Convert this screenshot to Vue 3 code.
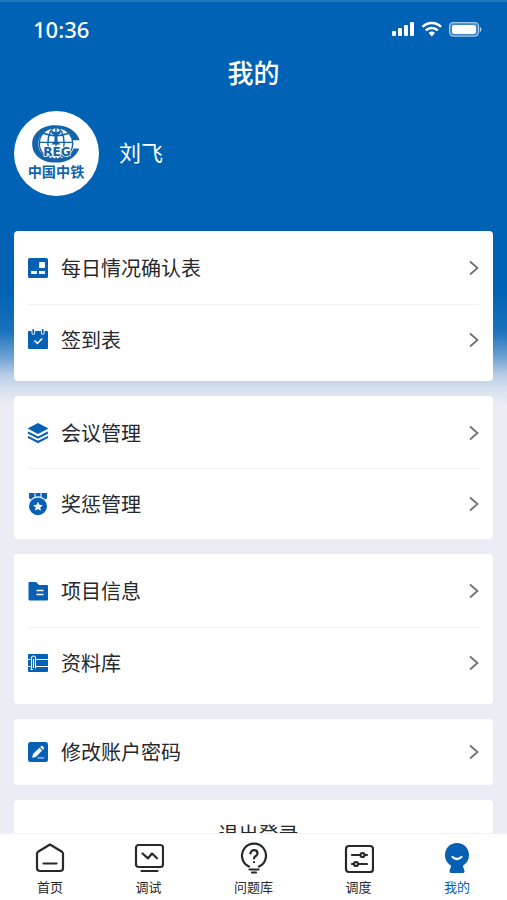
<template>
  <div class="page">
    <main class="content">
      <div class="status-bar">
        <span class="time">10:36</span>
        <svg class="status-icons" width="92" height="18" viewBox="0 0 92 18" fill="#fff" aria-hidden="true">
          <rect x="1" y="11" width="4" height="5" rx="1" />
          <rect x="7" y="8" width="4" height="8" rx="1" />
          <rect x="13" y="5" width="4" height="11" rx="1" />
          <rect x="19" y="2" width="4" height="14" rx="1" />
          <g fill="none" stroke="#fff" stroke-width="2.5">
            <path d="M31.5 6.8a13 13 0 0 1 18.6 0" />
            <path d="M34.8 10.4a8.5 8.5 0 0 1 12 0" />
          </g>
          <path d="M37.6 13a4.8 4.8 0 0 1 6.4 0l-3.2 3.4z" />
          <rect x="58.6" y="2.6" width="29" height="13.5" rx="4" fill="#3b86c9" stroke="#a5c9e9" stroke-width="1.3" />
          <rect x="61" y="5" width="24" height="9" rx="2" />
          <path d="M89 7c2 .6 2 4.400 0 5z" fill="#a5c9e9" />
        </svg>
      </div>

      <h1 class="title">我的</h1>

      <section class="profile">
        <svg class="avatar" viewBox="0 0 84 84" role="img" aria-label="中国中铁">
          <circle cx="42" cy="42" r="42" fill="#fff" />
          <g fill="none" stroke="#1463ad" stroke-width="1.4">
            <ellipse cx="41.500" cy="32" rx="16.500" ry="16" />
            <ellipse cx="41.500" cy="32" rx="8" ry="16" />
            <path d="M41.500 16v32M25 31h33M29 22q12.500 5 25 0M29 46q12.500-4 25 0" />
          </g>
          <path
            d="M65 29C62 19.500 53 14 41 14 27 14 18 22 18 32.500S27 51 41 51c12 0 20-5 23.500-14H59c-3 7-9.500 10.500-17.500 10.500C31 47.500 24 41 24 32.500S31 17 41.500 17C50 17 55.500 21.500 58 29z"
            fill="#1463ad"
          />
          <path d="M37 19l2.500 1.500h4L46 19v3l-3 2v6l3 3h-9l3-3v-6l-3-2z" fill="#1463ad" />
          <text x="42.500" y="44" class="logo-letters">REG</text>
          <text x="41.500" y="65" class="logo-name">中国中铁</text>
        </svg>
        <span class="user-name">刘飞</span>
      </section>

      <nav class="cards" aria-label="功能菜单">
        <div v-for="(group, i) in menuGroups" :key="i" class="card" :class="group.size">
          <a v-for="item in group.items" :key="item.icon" href="#" class="row">
            <svg class="row-icon" viewBox="0 0 20 20" aria-hidden="true">
              <g v-if="item.icon === 'form'">
                <rect width="20" height="20" rx="1.500" fill="#0860b4" />
                <rect x="11" y="4" width="6" height="6" rx="1" fill="#fff" />
                <rect x="3" y="13" width="6" height="3" fill="#fff" />
                <rect x="11" y="13" width="6" height="3" fill="#fff" />
              </g>
              <g v-else-if="item.icon === 'calendar'">
                <path d="M1 1h18q1 0 1 1v16q0 1-1 1H1q-1 0-1-1V2q0-1 1-1z" fill="#0860b4" />
                <path d="M3.500-1v4q0 1.800 1.800 1.800T7.100 3V-1zM12.900-1v4q0 1.800 1.800 1.800T16.500 3V-1z" fill="#fff" />
                <path d="M5.300 0v3M14.700 0v3" stroke="#0860b4" stroke-width="1.800" stroke-linecap="round" />
                <path d="M6.500 10.500l2.900 2.900 4.800-4.900" fill="none" stroke="#fff" stroke-width="1.500" />
              </g>
              <g v-else-if="item.icon === 'layers'">
                <path d="M10 0l10.500 5.500L10 11-.5 5.500z" fill="#0860b4" />
                <path d="M0 9.500l10 5.200 10-5.200M0 13.800L10 19l10-5.200" fill="none" stroke="#0860b4" stroke-width="2" />
              </g>
              <g v-else-if="item.icon === 'medal'">
                <path d="M1-1h5.500v6l-3 1.500L1 4zM13.500-1H19v5l-2.500 2.500-3-1.500zM7.500-1h5v4h-5z" fill="#0860b4" />
                <circle cx="10" cy="12.300" r="10" fill="#fff" />
                <circle cx="10" cy="12.300" r="8.900" fill="#0860b4" />
                <path
                  d="M10 7.800l1.400 3 3.300.4-2.400 2.300.6 3.200-2.900-1.600-2.900 1.600.6-3.200-2.400-2.300 3.300-.4z"
                  fill="#fff"
                />
              </g>
              <g v-else-if="item.icon === 'folder'">
                <path d="M1 1h7l3 3h8q1 0 1 1v13.500q0 1-1 1H1.500q-1 0-1-1v-16.500q0-1 .5-1z" fill="#0860b4" />
                <path d="M8.500 9.500h7M8.500 13.500h7" stroke="#fff" stroke-width="1.600" />
              </g>
              <g v-else-if="item.icon === 'library'">
                <rect y="1" width="20" height="18" rx="1" fill="#0860b4" />
                <path d="M8 6.500h12M8 13.500h12M0 6.500h2.500M0 13.500h2.500" stroke="#fff" stroke-width="1.200" />
                <path
                  d="M3.500 16.500V5a2 2 0 0 1 4 0v10.500M5.500 6v9M2.500 16.500h2.500"
                  fill="none"
                  stroke="#fff"
                  stroke-width="1.100"
                />
              </g>
              <g v-else>
                <rect width="20" height="20" rx="2.500" fill="#0860b4" />
                <path
                  d="M4.200 15.700l.8-3.600 6.400-6.400 2.800 2.800-6.400 6.400zM12.200 4.900l.8-.8q.8-.6 1.500 0l1.300 1.300q.6.700 0 1.500l-.8.800z"
                  fill="#fff"
                />
                <path d="M9.500 15.900H16" stroke="#a9caea" stroke-width="1.300" />
              </g>
            </svg>
            <span class="row-label">{{ item.label }}</span>
            <svg class="chevron" viewBox="0 0 10 16" aria-hidden="true">
              <path d="M1 1.500L8.500 8 1 14.500" fill="none" stroke="#6c6f73" stroke-width="1.700" />
            </svg>
          </a>
        </div>
        <button type="button" class="card logout">退出登录</button>
      </nav>
    </main>

    <nav class="tab-bar" aria-label="底部导航">
      <a
        v-for="tab in tabs"
        :key="tab.key"
        href="#"
        class="tab"
        :class="{ active: activeTab === tab.key }"
        @click.prevent="activeTab = tab.key"
      >
        <svg
          class="tab-icon"
          viewBox="0 0 32 32"
          fill="none"
          stroke="currentColor"
          stroke-width="2.200"
          stroke-linecap="round"
          stroke-linejoin="round"
          aria-hidden="true"
        >
          <g v-if="tab.key === 'home'">
            <path d="M16 2.500l12 7.300q1 .7 1 2V26q0 3-3 3H6q-3 0-3-3V11.800q0-1.300 1-2z" />
            <path d="M9.500 21.500h13" />
          </g>
          <g v-else-if="tab.key === 'debug'">
            <rect x="4" y="3" width="27" height="22" rx="2.500" />
            <path d="M10.500 11.500l5.500 4.800 4-4.800 5 4.800M9.500 29h16" />
          </g>
          <g v-else-if="tab.key === 'issues'">
            <path d="M12 24.500a12 12 0 1 1 10 0M12.500 27.500h9M15 30.500h4" />
            <path d="M13.500 11.500c0-4.500 7-4.500 7 0 0 2.500-3.500 2.500-3.500 5" />
            <path d="M17 20v.2" />
          </g>
          <g v-else-if="tab.key === 'dispatch'">
            <rect x="4" y="4" width="27" height="26" rx="3" />
            <path d="M10 13h8M23 13h2M10 22h1M16 22h9" />
            <circle cx="20.500" cy="13" r="2" />
            <circle cx="14" cy="22" r="2" />
          </g>
          <g v-else stroke="none">
            <path
              d="M16 1C9 1 4 6.500 4 13c0 5 2.500 8.500 6 10.500-.3 3-1.500 4.500-1.500 5.500 0 1.300.5 2 1.500 2h12c1 0 1.500-.7 1.500-2 0-1-1.200-2.500-1.500-5.500 3.500-2 6-5.500 6-10.500C28 6.500 23 1 16 1z"
              fill="currentColor"
            />
            <path d="M11.500 15q4.500 4 9 0" stroke="#fff" stroke-width="2.200" />
          </g>
        </svg>
        <span>{{ tab.label }}</span>
      </a>
    </nav>
  </div>
</template>

<script setup>
import { ref } from 'vue';

const menuGroups = [
  {
    size: 'tall',
    items: [
      { icon: 'form', label: '每日情况确认表' },
      { icon: 'calendar', label: '签到表' }
    ]
  },
  {
    size: 'compact',
    items: [
      { icon: 'layers', label: '会议管理' },
      { icon: 'medal', label: '奖惩管理' }
    ]
  },
  {
    size: 'tall',
    items: [
      { icon: 'folder', label: '项目信息' },
      { icon: 'library', label: '资料库' }
    ]
  },
  {
    size: 'single',
    items: [{ icon: 'edit', label: '修改账户密码' }]
  }
];

const tabs = [
  { key: 'home', label: '首页' },
  { key: 'debug', label: '调试' },
  { key: 'issues', label: '问题库' },
  { key: 'dispatch', label: '调度' },
  { key: 'mine', label: '我的' }
];

const activeTab = ref('mine');
</script>

<style>
body {
  margin: 0;
  background: #ebecf4;
}
</style>

<style scoped>
.page {
  display: flex;
  flex-direction: column;
  height: 100vh;
  box-sizing: border-box;
  font-family: "Noto Sans CJK SC", sans-serif;
  color: #26282c;
  border-top: 2px solid #2577be;
  background: linear-gradient(
    #0062b4 0,
    #0062b4 290px,
    #1c72bc 330px,
    #6fa3d3 356px,
    #b5cbe4 372px,
    #d5e0ed 386px,
    #ebecf4 404px
  );
}

.content {
  flex: 1;
  min-height: 0;
  overflow-y: auto;
  scrollbar-width: none;
}

.status-bar {
  display: flex;
  justify-content: space-between;
  align-items: center;
  height: 54px;
  padding: 0 24px 0 33px;
  color: #fff;
}
.time {
  font-family: "Noto Sans", sans-serif;
  font-size: 22px;
  font-weight: 500;
}

.title {
  margin: 0;
  color: #fff;
  font-size: 26px;
  font-weight: 500;
  line-height: 32px;
  text-align: center;
}

.profile {
  display: flex;
  align-items: center;
  gap: 20px;
  padding: 23px 14px 35px;
}
.avatar {
  width: 85px;
  height: 85px;
}
.logo-letters {
  font: bold 12px "DejaVu Sans", sans-serif;
  fill: #1463ad;
  stroke: #fff;
  stroke-width: 1.5;
  paint-order: stroke;
  text-anchor: middle;
}
.logo-name {
  font-size: 14px;
  font-weight: 700;
  fill: #1463ad;
  text-anchor: middle;
}
.user-name {
  padding-bottom: 6px;
  color: #fff;
  font-size: 22px;
  line-height: 30px;
}

.cards {
  display: flex;
  flex-direction: column;
  gap: 15px;
  padding: 0 14px 15px;
}
.card {
  padding: 0 14px;
  border-radius: 4px;
  background: #fff;
}
.card.tall {
  padding-top: 1px;
  padding-bottom: 6px;
}
.card.compact {
  padding-top: 1px;
}

.row {
  display: flex;
  align-items: center;
  gap: 13px;
  height: 72px;
  box-sizing: border-box;
  color: inherit;
  text-decoration: none;
}
.row + .row {
  height: 71px;
  border-top: 1px solid #f1f1f3;
}
.compact .row {
  height: 71px;
}
.single .row {
  height: 66px;
}
.row-icon {
  width: 20px;
  height: 20px;
  overflow: visible;
}
.row-label {
  flex: 1;
  font-size: 20px;
  line-height: 28px;
}
.chevron {
  width: 10px;
  height: 16px;
}

.logout {
  height: 66px;
  padding-left: 24px;
  border: none;
  color: inherit;
  font-family: inherit;
  font-size: 20px;
  cursor: pointer;
}

.tab-bar {
  display: flex;
  justify-content: space-between;
  height: 67px;
  padding: 8px 37px 0;
  box-sizing: border-box;
  border-top: 1px solid #f0f0f3;
  background: #fff;
}
.tab {
  display: flex;
  flex-direction: column;
  align-items: center;
  gap: 4px;
  color: #26282c;
  font-size: 13px;
  line-height: 18px;
  text-decoration: none;
}
.tab-icon {
  width: 32px;
  height: 32px;
  margin: 0 -3px;
}
.tab.active {
  color: #0860b4;
}
</style>
